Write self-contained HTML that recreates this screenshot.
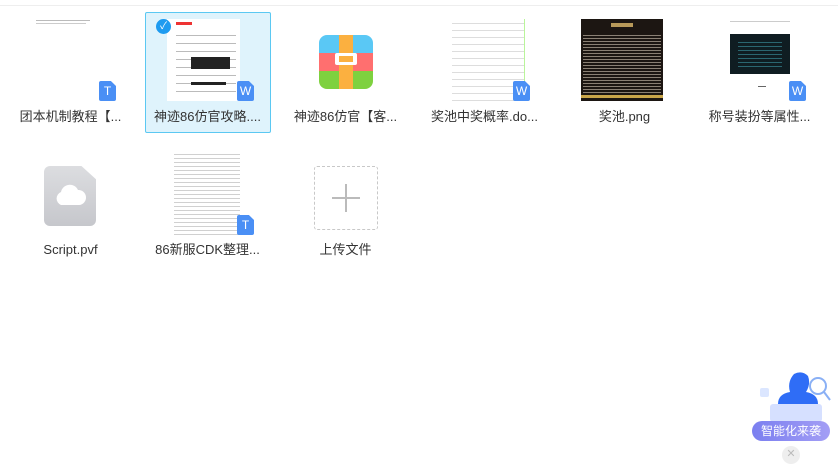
<!DOCTYPE html>
<html><head><meta charset="utf-8">
<style>
*{margin:0;padding:0;box-sizing:border-box}
body{width:838px;height:457px;background:#fff;position:relative;overflow:hidden;font-family:"Liberation Sans","Noto Sans CJK SC",sans-serif}
.a{position:absolute}
.lbl{position:absolute;width:125px;text-align:center;font-size:13px;line-height:18px;color:#333;white-space:nowrap}
.badge{position:absolute;width:17px;height:20px;background:#4a8ff5;border-radius:2px;color:#fff;font-size:12px;text-align:center;line-height:20px;clip-path:polygon(0 0,70% 0,100% 25%,100% 100%,0 100%)}
.ln{position:absolute;height:1px;background:#999}
</style></head><body>
<div class="a" style="left:0;top:5px;width:838px;height:1px;background:#eee"></div>

<div class="ln" style="left:36px;top:20px;width:54px;background:#bbb"></div>
<div class="ln" style="left:36px;top:23px;width:50px;background:#ccc"></div>
<div class="badge" style="left:99px;top:81px">T</div>
<div class="lbl" style="left:8px;top:108px">团本机制教程【...</div>

<div class="a" style="left:145px;top:12px;width:126px;height:121px;background:#dff3fc;border:1px solid #5bc8f2;border-radius:2px"></div>
<div class="a" style="left:167px;top:19px;width:73px;height:82px;background:#fff">
 <div class="a" style="left:9px;top:3px;width:16px;height:3px;background:#e33"></div>
 <div class="a" style="left:9px;top:12px;width:60px;height:66px;background:repeating-linear-gradient(#fff 0 4px,#bbb 4px 5px,#fff 5px 8px)"></div>
 <div class="a" style="left:24px;top:38px;width:39px;height:12px;background:#222"></div>
 <div class="a" style="left:24px;top:63px;width:35px;height:3px;background:#222"></div>
</div>
<div class="a" style="left:156px;top:19px;width:15px;height:15px;border-radius:50%;background:#1e9bf0;color:#fff;font-size:10px;text-align:center;line-height:15px">✓</div>
<div class="badge" style="left:237px;top:81px">W</div>
<div class="lbl" style="left:145px;top:108px">神迹86仿官攻略....</div>

<div class="a" style="left:319px;top:35px;width:54px;height:54px;border-radius:8px;overflow:hidden;background:linear-gradient(#5ac8f5 0 33%,#ff6f6f 33% 67%,#7ed13f 67%)">
 <div class="a" style="left:20px;top:0;width:14px;height:54px;background:#fbb040"></div>
 <div class="a" style="left:16px;top:18px;width:22px;height:12px;background:#fff;border-radius:2px"></div>
 <div class="a" style="left:20px;top:21px;width:14px;height:6px;background:#fbb040"></div>
</div>
<div class="lbl" style="left:283px;top:108px">神迹86仿官【客...</div>

<div class="a" style="left:452px;top:19px;width:73px;height:82px;background:repeating-linear-gradient(#fff 0 4px,#ddd 4px 5px,#fff 5px 7px);border-right:1px solid #b9f59a"></div>
<div class="badge" style="left:513px;top:81px">W</div>
<div class="lbl" style="left:422px;top:108px">奖池中奖概率.do...</div>

<div class="a" style="left:581px;top:19px;width:82px;height:82px;background:#1c1612">
 <div class="a" style="left:30px;top:4px;width:22px;height:4px;background:#b89a5a"></div>
 <div class="a" style="left:2px;top:14px;width:78px;height:60px;background:repeating-linear-gradient(#1c1612 0 2px,#8a8074 2px 3px)"></div>
 <div class="a" style="left:0;top:76px;width:82px;height:3px;background:#c9a64a"></div>
</div>
<div class="lbl" style="left:562px;top:108px">奖池.png</div>

<div class="a" style="left:730px;top:19px;width:63px;height:82px;background:#fff">
 <div class="ln" style="left:0;top:2px;width:60px;background:#ccc"></div>
 <div class="a" style="left:0;top:15px;width:60px;height:40px;background:#0f1d22"></div>
 <div class="a" style="left:8px;top:20px;width:44px;height:30px;background:repeating-linear-gradient(#0f1d22 0 3px,#2a6670 3px 4px)"></div>
 <div class="ln" style="left:28px;top:67px;width:8px;background:#666"></div>
</div>
<div class="badge" style="left:789px;top:81px">W</div>
<div class="lbl" style="left:697px;top:108px">称号装扮等属性...</div>

<div class="a" style="left:44px;top:166px;width:52px;height:60px;border-radius:6px;background:linear-gradient(#dcdde0,#c6c7cc);clip-path:polygon(0 0,72% 0,100% 22%,100% 100%,0 100%)"></div>
<svg class="a" style="left:53px;top:183px" width="34" height="24"><path d="M8 22a7 7 0 0 1 0-13 9 9 0 0 1 17-2 7 7 0 0 1 1 15z" fill="#fff"/></svg>
<div class="lbl" style="left:8px;top:241px">Script.pvf</div>

<div class="a" style="left:174px;top:152px;width:66px;height:83px;background:repeating-linear-gradient(#fff 0 2px,#d0d0d0 2px 3px,#fff 3px 4px)"></div>
<div class="badge" style="left:237px;top:215px">T</div>
<div class="lbl" style="left:145px;top:241px">86新服CDK整理...</div>

<div class="a" style="left:314px;top:166px;width:64px;height:64px;border:1px dashed #c8c8c8;border-radius:3px"></div>
<div class="a" style="left:332px;top:197px;width:28px;height:2px;background:#bbb"></div>
<div class="a" style="left:345px;top:184px;width:2px;height:28px;background:#bbb"></div>
<div class="lbl" style="left:283px;top:241px">上传文件</div>

<svg class="a" style="left:756px;top:360px" width="80" height="62">
 <rect x="4" y="28" width="9" height="9" rx="2" fill="#dbe6ff"/>
 <rect x="14" y="44" width="52" height="18" rx="3" fill="#d6e0ff"/>
 <path d="M22 44q0-10 12-12q-3-10 4-18q8-4 14 2q3 8-2 16q12 2 12 12z" fill="#2f6df6"/>
 <circle cx="62" cy="26" r="8" fill="none" stroke="#8ab0f5" stroke-width="2"/>
 <line x1="68" y1="32" x2="74" y2="40" stroke="#8ab0f5" stroke-width="2"/>
</svg>
<div class="a" style="left:752px;top:421px;width:78px;height:20px;border-radius:10px;background:linear-gradient(90deg,#7b7ff0,#a39ef5);color:#fff;font-size:12px;text-align:center;line-height:20px">智能化来袭</div>
<div class="a" style="left:782px;top:446px;width:18px;height:18px;border-radius:50%;background:#eee;color:#bbb;font-size:11px;text-align:center;line-height:16px">✕</div>
</body></html>
